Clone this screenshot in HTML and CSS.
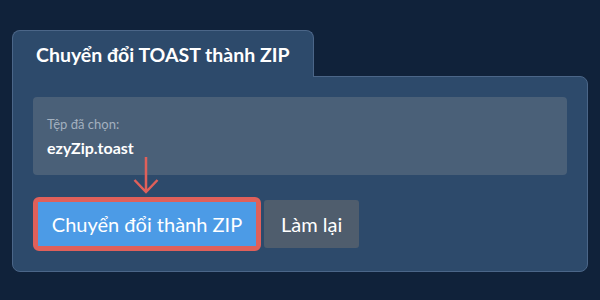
FILE: index.html
```html
<!DOCTYPE html>
<html lang="vi">
<head>
  <meta charset="UTF-8" />
  <title>Chuyển đổi TOAST thành ZIP</title>
  <link rel="stylesheet" href="styles.css">
</head>
<body>
  <div class="card">
    <div class="tab">
      <h1>Chuyển đổi TOAST thành ZIP</h1>
    </div>

    <div class="panel">
      <div class="file-box">
        <div class="file-label">Tệp đã chọn:</div>
        <div class="file-name">ezyZip.toast</div>
      </div>

      <div class="actions">
        <div class="highlight">
          <button class="btn primary">Chuyển đổi thành ZIP</button>
          <!-- pointer arrow -->
          <svg class="arrow" width="26" height="37" viewBox="0 0 26 37">
            <path d="M13 0 V35 M1.5 23 L13 35 L24.5 23" fill="none" stroke="#e0605a" stroke-width="2.5" />
          </svg>
        </div>
        <button class="btn secondary">Làm lại</button>
      </div>
    </div>
  </div>
</body>
</html>
```

FILE: styles.css
```css
body {
  margin: 0;
  background-color: #10223a;
  font-family: Lato, "Noto Sans", sans-serif;
  color: #fff;
}
.card {
  padding: 30px 12px 0 12px;
}
.tab {
  display: inline-block;
  position: relative;
  z-index: 1;
  margin-bottom: -1px;
  padding: 12px 10px 10px 23px;
  width: 267px;
  background: #2d4a6b;
  border: 1px solid #4b6688;
  border-bottom: none;
  border-radius: 8px 8px 0 0;
}
h1 {
  margin: 0;
  font-size: 19.5px;
  font-weight: bold;
  line-height: 24px;
  white-space: nowrap;
}
.panel {
  background: #2d4a6b;
  border: 1px solid #4b6688;
  border-radius: 0 8px 8px 8px;
  padding: 20px;
}
.file-box {
  background: #4a6078;
  border-radius: 4px;
  padding: 19px 14px 17px 14px;
  height: 42px;
}
.file-label {
  font-size: 13px;
  color: #a3b0bf;
  line-height: 16px;
}
.file-name {
  margin-top: 6px;
  font-size: 16px;
  font-weight: bold;
  line-height: 20px;
}
.actions {
  display: flex;
  align-items: center;
  gap: 3px;
  margin-top: 22px;
}
.highlight {
  position: relative;
  border: 5px solid #e0605a;
  border-radius: 6px;
}
.btn {
  display: block;
  border: none;
  border-radius: 3px;
  font-family: Lato, "Noto Sans", sans-serif;
  font-size: 20px;
  color: #fff;
  cursor: pointer;
  white-space: nowrap;
}
.btn.primary {
  height: 44px;
  padding: 0;
  width: 218px;
  border-radius: 0;
  background: #4c9be6;
}
.btn.secondary {
  height: 48px;
  padding: 0 17px;
  background: #4f5d6d;
}
.arrow {
  position: absolute;
  left: 95px;
  top: -45px;
}
```
